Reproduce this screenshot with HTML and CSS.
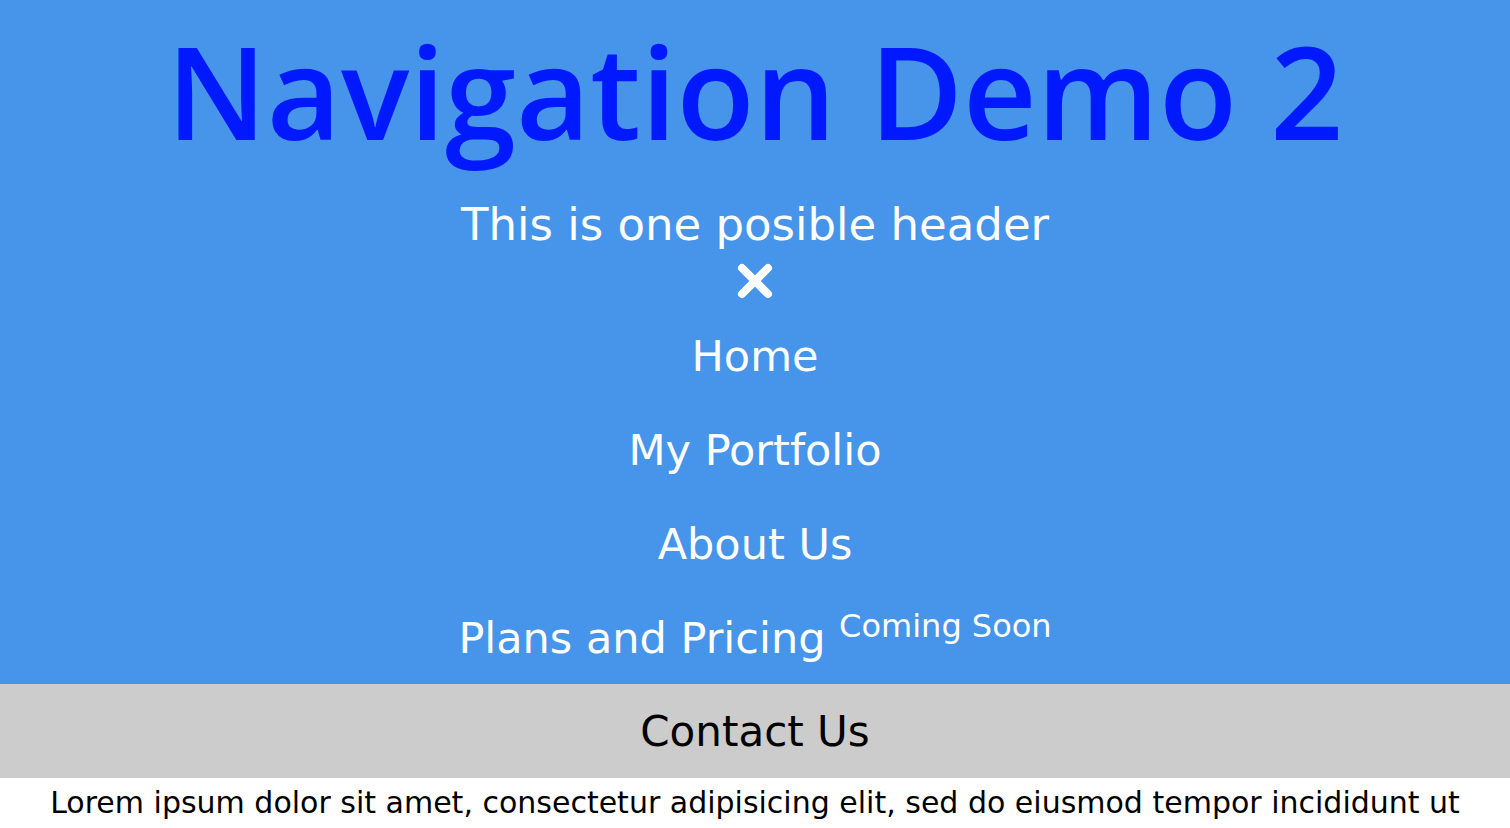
FILE: index.html
```html
<!DOCTYPE html>
<html lang="en">
<head>
<meta charset="utf-8">
<title>Navigation Demo 2</title>
<link rel="stylesheet" href="styles.css">
</head>
<body>
<header class="site-header">
  <h1 class="title">Navigation Demo 2</h1>
  <p class="tagline">This is one posible header</p>
  <button class="menu-toggle" aria-label="Close menu">
    <svg viewBox="0 0 38 38" width="38" height="38"><path d="M6 6 L32 32 M32 6 L6 32" stroke="#fff" stroke-width="8" stroke-linecap="round" fill="none"/></svg>
  </button>
  <nav class="main-nav">
    <ul class="nav-list">
      <li class="nav-item"><a href="#">Home</a></li>
      <li class="nav-item"><a href="#">My Portfolio</a></li>
      <li class="nav-item"><a href="#">About Us</a></li>
      <li class="nav-item"><a href="#">Plans and Pricing <sup class="badge">Coming Soon</sup></a></li>
      <li class="nav-item nav-contact"><a href="#">Contact Us</a></li>
    </ul>
  </nav>
</header>
<main class="content">
  <p class="lorem">Lorem ipsum dolor sit amet, consectetur adipisicing elit, sed do eiusmod tempor incididunt ut labore et dolore magna aliqua. Ut enim ad minim veniam, quis nostrud exercitation ullamco laboris nisi ut aliquip ex ea commodo consequat. Duis aute irure dolor in reprehenderit in voluptate velit esse cillum dolore eu fugiat nulla pariatur.</p>
</main>
</body>
</html>
```
FILE: styles.css
```css
html, body {
  margin: 0;
  padding: 0;
}
body {
  font-family: "DejaVu Sans", Verdana, sans-serif;
  background: #fff;
  color: #000;
}
.site-header {
  background: #4695eb;
  text-align: center;
  color: #fff;
  display: flex;
  flex-direction: column;
  align-items: center;
  padding-top: 4px;
}
.title {
  font-family: "Open Sans", sans-serif;
  font-weight: 600;
  font-size: 128px;
  line-height: 174px;
  color: #0019ff;
  margin: 0;
}
.tagline {
  font-size: 45px;
  line-height: 51px;
  margin: 21px 0 0;
}
.menu-toggle {
  background: none;
  border: 0;
  padding: 0;
  margin: 12px 0 0;
  display: block;
  width: 38px;
  height: 38px;
}
.menu-toggle svg { display: block; }
.main-nav { width: 100%; margin-top: 8px; }
.nav-list {
  list-style: none;
  margin: 0;
  padding: 0;
}
.nav-item a {
  display: block;
  color: #fff;
  text-decoration: none;
  font-size: 43px;
  line-height: 51px;
  padding: 23px 0 20px;
}
.badge {
  font-size: 32px;
  vertical-align: 16px;
  line-height: 0;
}
.nav-contact { background: #cccccc; }
.nav-contact a { color: #000; font-size: 42px; padding: 22px 0 21px; }
.lorem {
  margin: 3px 0 0;
  font-size: 30px;
  line-height: 44px;
  text-align: center;
  padding: 0 40px;
}
```
